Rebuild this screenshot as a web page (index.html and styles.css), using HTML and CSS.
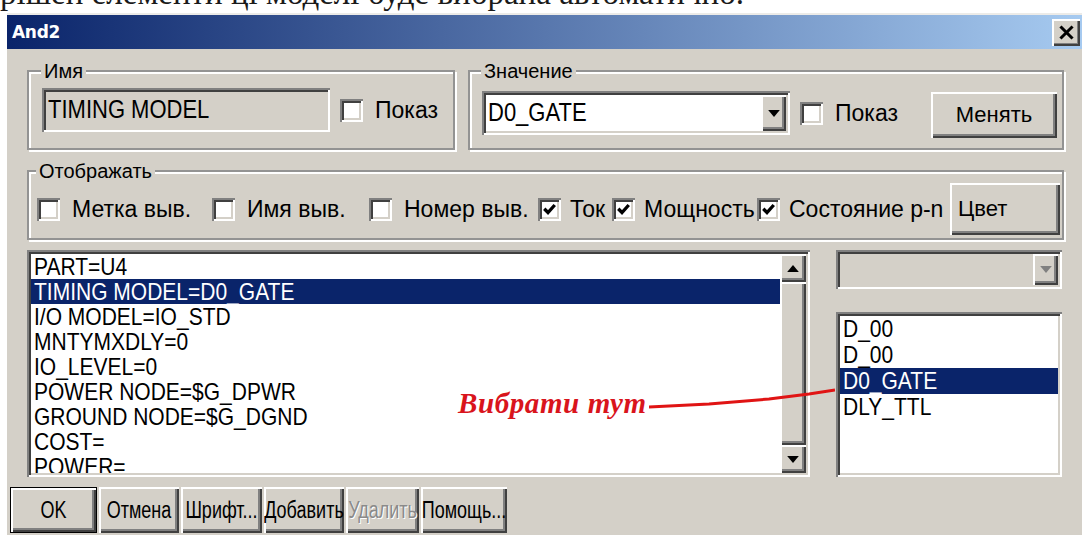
FILE: index.html
```html
<!DOCTYPE html>
<html lang="ru">
<head>
<meta charset="utf-8">
<title>And2</title>
<link rel="stylesheet" href="styles.css">
</head>
<body>
<p class="doc-line"><span>рішен елементи ці моделі буде вибрана автоматично.</span></p>

<div class="window">
  <div class="titlebar">
    <span class="title">And2</span>
    <span class="close-btn" aria-label="Закрыть">
      <svg viewBox="0 0 12 12" width="15" height="15"><path d="M2 2 L10 10 M10 2 L2 10" stroke="#000" stroke-width="2.4" stroke-linecap="square"/></svg>
    </span>
  </div>

  <div class="content">
    <div class="row-top">
      <div class="group group-name">
        <span class="legend">Имя</span>
        <div class="group-body">
          <div class="field field-readonly"><span class="txt">TIMING MODEL</span></div>
          <label class="check"><span class="box"></span><span class="check-text">Показ</span></label>
        </div>
      </div>
      <div class="group group-value">
        <span class="legend">Значение</span>
        <div class="group-body">
          <div class="combo combo-value">
            <span class="combo-text"><span class="txt">D0_GATE</span></span>
            <span class="drop-btn"><svg viewBox="0 0 10 6" width="12" height="7"><path d="M0 0 H10 L5 6 Z" fill="#000"/></svg></span>
          </div>
          <label class="check"><span class="box"></span><span class="check-text">Показ</span></label>
          <button class="btn btn-change">Менять</button>
        </div>
      </div>
    </div>

    <div class="group group-show">
      <span class="legend">Отображать</span>
      <div class="show-grid">
        <label class="check"><span class="box"></span><span class="check-text">Метка выв.</span></label>
        <label class="check"><span class="box"></span><span class="check-text">Имя выв.</span></label>
        <label class="check"><span class="box"></span><span class="check-text">Номер выв.</span></label>
        <label class="check check-tight"><span class="box"><svg viewBox="0 0 10 10" width="15" height="15"><path d="M1.5 4.5 L4 7 L8.5 2" fill="none" stroke="#000" stroke-width="2.2"/></svg></span><span class="check-text">Ток</span></label>
        <label class="check check-tight"><span class="box"><svg viewBox="0 0 10 10" width="15" height="15"><path d="M1.5 4.5 L4 7 L8.5 2" fill="none" stroke="#000" stroke-width="2.2"/></svg></span><span class="check-text">Мощность</span></label>
        <label class="check check-tight"><span class="box"><svg viewBox="0 0 10 10" width="15" height="15"><path d="M1.5 4.5 L4 7 L8.5 2" fill="none" stroke="#000" stroke-width="2.2"/></svg></span><span class="check-text">Состояние p-n</span></label>
        <button class="btn btn-color">Цвет</button>
      </div>
    </div>

    <div class="row-lists">
      <div class="listbox props">
        <ul class="items">
          <li><span class="txt">PART=U4</span></li>
          <li class="selected"><span class="txt">TIMING MODEL=D0_GATE</span></li>
          <li><span class="txt">I/O MODEL=IO_STD</span></li>
          <li><span class="txt">MNTYMXDLY=0</span></li>
          <li><span class="txt">IO_LEVEL=0</span></li>
          <li><span class="txt">POWER NODE=$G_DPWR</span></li>
          <li><span class="txt">GROUND NODE=$G_DGND</span></li>
          <li><span class="txt">COST=</span></li>
          <li><span class="txt">POWER=</span></li>
        </ul>
        <div class="vscroll">
          <span class="sb-btn"><svg viewBox="0 0 10 6" width="12" height="7"><path d="M0 6 H10 L5 0 Z" fill="#000"/></svg></span>
          <span class="sb-thumb"></span>
          <span class="sb-btn"><svg viewBox="0 0 10 6" width="12" height="7"><path d="M0 0 H10 L5 6 Z" fill="#000"/></svg></span>
        </div>
      </div>
      <div class="side">
        <div class="combo combo-disabled">
          <span class="combo-text"></span>
          <span class="drop-btn"><svg viewBox="0 0 10 6" width="12" height="7"><path d="M0 0 H10 L5 6 Z" fill="#808080"/></svg></span>
        </div>
        <ul class="listbox models">
          <li><span class="txt">D_00</span></li>
          <li><span class="txt">D_00</span></li>
          <li class="selected"><span class="txt">D0_GATE</span></li>
          <li><span class="txt">DLY_TTL</span></li>
        </ul>
      </div>
    </div>

    <div class="button-row">
      <button class="btn btn-default btn-ok"><span class="txt">OK</span></button>
      <button class="btn btn-cancel"><span class="txt">Отмена</span></button>
      <button class="btn btn-font"><span class="txt">Шрифт...</span></button>
      <button class="btn btn-add"><span class="txt">Добавить</span></button>
      <button class="btn btn-delete" disabled><span class="txt">Удалить</span></button>
      <button class="btn btn-help"><span class="txt">Помощь...</span></button>
    </div>
  </div>

  <div class="callout">
    <span class="callout-text">Вибрати тут</span>
    <svg class="callout-line" width="186" height="30" viewBox="0 0 186 30">
      <polyline points="0,24 60,21 120,16 160,11 186,7" fill="none" stroke="#e01414" stroke-width="3"/>
    </svg>
  </div>
</div>
</body>
</html>
```

FILE: styles.css
```css
* { box-sizing: border-box; }

html, body { margin: 0; padding: 0; }

body {
  width: 1082px;
  height: 535px;
  overflow: hidden;
  background: #fff;
  color: #000;
  font-family: "Liberation Sans", Arial, sans-serif;
}

/* line of document text above the dialog, cut at the top */
.doc-line {
  margin: 0;
  height: 13px;
  overflow: hidden;
  white-space: nowrap;
  font-family: "Liberation Serif", "Times New Roman", serif;
  font-size: 33px;
  line-height: 33px;
  color: #1a1a1a;
}
.doc-line span { display: block; margin-top: -23px; }

/* dialog window */
.window {
  position: relative;
  width: 1075px;
  height: 522px;
  margin-left: 7px;
  background: #d4d0c8;
  border-top: 2px solid #ecebe8;
  display: flex;
  flex-direction: column;
  overflow: hidden;
}

.titlebar {
  flex: none;
  height: 34px;
  display: flex;
  align-items: center;
  justify-content: space-between;
  padding: 0 2px 0 5px;
  background: linear-gradient(to right, #0a246a, #a6caf0);
}
.title {
  color: #fff;
  font-family: "DejaVu Sans", Verdana, sans-serif;
  font-weight: bold;
  font-size: 17px;
  letter-spacing: -0.3px;
}
.close-btn {
  width: 28px;
  height: 27px;
  display: flex;
  align-items: center;
  justify-content: center;
  background: #d4d0c8;
  box-shadow: inset 2px 2px 0 #fff, inset -2px -2px 0 #404040, inset -3px -3px 0 #808080;
}

/* 3D edges */
.btn, .sb-btn, .sb-thumb, .drop-btn {
  background: #d4d0c8;
  box-shadow: inset 2px 2px 0 #fff, inset -2px -2px 0 #404040, inset -4px -4px 0 #808080;
}
.field, .combo, .box, .listbox {
  box-shadow: inset 2px 2px 0 #808080, inset -2px -2px 0 #fff, inset 4px 4px 0 #404040, inset -4px -4px 0 #d4d0c8;
}

/* narrow, tall lettering of the scaled dialog font */
.txt {
  display: inline-block;
  transform: scaleY(1.18);
}

.content {
  flex: 1;
  display: flex;
  flex-direction: column;
  padding: 21px 18px 0 20px;
}

/* group boxes */
.group {
  border: 2px solid #939393;
  box-shadow: inset 2px 2px 0 #fff, 2px 2px 0 #fff;
  display: flex;
  flex-direction: column;
}
.legend {
  align-self: flex-start;
  margin: -12px 0 0 -1px;
  padding: 0 3px;
  background: #d4d0c8;
  font-size: 20px;
  line-height: 22px;
}
.group-body {
  display: flex;
  align-items: center;
  margin-top: 6px;
}

.row-top {
  display: flex;
  gap: 13px;
  height: 80px;
}
.group-name { width: 428px; padding: 0 12px 0 13px; }
.group-value { flex: 1; padding: 0 5px 0 12px; }

.field {
  height: 44px;
  display: flex;
  align-items: center;
  padding: 4px 6px;
  font-size: 22px;
}
.field-readonly { width: 288px; background: #d4d0c8; }

.combo {
  height: 44px;
  display: flex;
  align-items: stretch;
  padding: 4px;
  background: #fff;
}
.combo-value { width: 308px; }
.combo-text {
  flex: 1;
  display: flex;
  align-items: center;
  padding-left: 2px;
  font-size: 22px;
}
.drop-btn {
  width: 25px;
  display: flex;
  align-items: center;
  justify-content: center;
}
.combo-disabled { height: 39px; background: #d4d0c8; }

/* check boxes */
.check {
  display: flex;
  align-items: center;
  gap: 12px;
  font-size: 23px;
  white-space: nowrap;
}
.group-body .check { margin-left: 10px; }
.check-tight { gap: 9px; }
.box {
  flex: none;
  width: 23px;
  height: 23px;
  background: #fff;
  display: flex;
  align-items: center;
  justify-content: center;
}

/* push buttons */
.btn {
  border: 0;
  padding: 0;
  font-family: inherit;
  font-size: 22px;
  color: #000;
}
.btn-change { margin-left: auto; width: 126px; height: 46px; margin-top: 4px; }
.btn-color { width: 110px; height: 52px; text-align: left; padding-left: 8px; }

.group-show {
  margin-top: 20px;
  height: 70px;
  padding: 0 2px 0 8px;
}
.show-grid {
  display: grid;
  grid-template-columns: 175px 157px 169px 74px 145px 193px 1fr;
  align-items: center;
  margin-top: 1px;
}

/* lists */
.row-lists {
  margin-top: 10px;
  height: 227px;
  display: grid;
  grid-template-columns: 783px 226px;
  column-gap: 26px;
}
.listbox {
  margin: 0;
  padding: 4px;
  list-style: none;
  background: #fff;
  overflow: hidden;
  font-size: 21px;
}
.props { display: flex; }
.items {
  flex: 1;
  margin: 0;
  padding: 0;
  list-style: none;
  overflow: hidden;
}
.items li {
  height: 25px;
  line-height: 25px;
  padding-left: 3px;
  white-space: nowrap;
}
.models li {
  height: 26px;
  line-height: 26px;
  padding-left: 3px;
  white-space: nowrap;
}
.selected { background: #0a246a; color: #fff; }

.vscroll {
  width: 26px;
  display: flex;
  flex-direction: column;
  background: #ece9e4;
}
.sb-btn {
  height: 28px;
  display: flex;
  align-items: center;
  justify-content: center;
}
.sb-thumb { flex: 1; }

.side {
  display: flex;
  flex-direction: column;
  gap: 23px;
}
.models { flex: 1; }

/* bottom buttons */
.button-row {
  display: flex;
  gap: 2px;
  margin: 10px 0 0 -17px;
  height: 46px;
}
.button-row .btn { font-size: 18px; }
.button-row .txt { transform: scaleY(1.35); }
.btn-default {
  outline: 1px solid #000;
  outline-offset: -1px;
  box-shadow: inset 3px 3px 0 #fff, inset -3px -3px 0 #404040, inset -5px -5px 0 #808080;
}
.btn-ok { width: 87px; }
.btn-cancel { width: 80px; }
.btn-font { width: 81px; }
.btn-add { width: 80px; }
.btn-delete { width: 73px; color: #8a8a8a; text-shadow: 1px 1px 0 #fff; }
.btn-help { width: 86px; }

/* red hand-written note */
.callout {
  position: absolute;
  left: 451px;
  top: 373px;
  display: flex;
  align-items: flex-start;
}
.callout-text {
  font-family: "Liberation Serif", "Times New Roman", serif;
  font-weight: bold;
  font-style: italic;
  font-size: 29px;
  line-height: 30px;
  letter-spacing: 0.6px;
  color: #d9141c;
  white-space: nowrap;
}
.callout-line { display: block; margin: -5px 0 0 2px; }
```
